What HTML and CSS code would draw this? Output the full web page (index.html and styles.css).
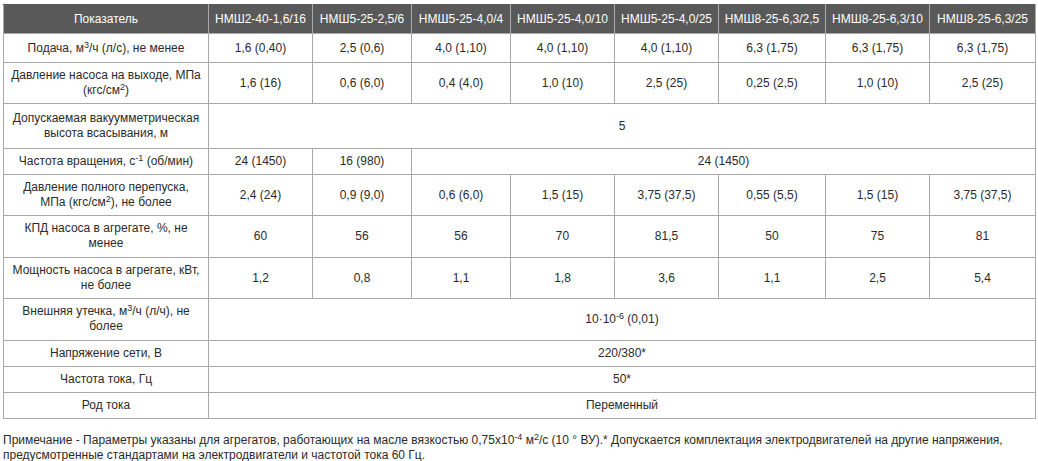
FILE: index.html
```html
<!DOCTYPE html>
<html lang="ru">
<head>
<meta charset="utf-8">
<title>НМШ</title>
<link rel="stylesheet" href="styles.css">
</head>
<body>
<table class="spec">
  <colgroup>
    <col class="c-name"><col class="c1"><col class="c2"><col class="c3"><col class="c4"><col class="c5"><col class="c6"><col class="c7"><col class="c8">
  </colgroup>
  <thead>
    <tr>
      <th>Показатель</th>
      <th>НМШ2-40-1,6/16</th>
      <th>НМШ5-25-2,5/6</th>
      <th>НМШ5-25-4,0/4</th>
      <th>НМШ5-25-4,0/10</th>
      <th>НМШ5-25-4,0/25</th>
      <th>НМШ8-25-6,3/2,5</th>
      <th>НМШ8-25-6,3/10</th>
      <th>НМШ8-25-6,3/25</th>
    </tr>
  </thead>
  <tbody>
    <tr class="r1">
      <td>Подача, м<sup>3</sup>/ч (л/с), не менее</td>
      <td>1,6 (0,40)</td><td>2,5 (0,6)</td><td>4,0 (1,10)</td><td>4,0 (1,10)</td><td>4,0 (1,10)</td><td>6,3 (1,75)</td><td>6,3 (1,75)</td><td>6,3 (1,75)</td>
    </tr>
    <tr>
      <td>Давление насоса на выходе, МПа (кгс/см<sup>2</sup>)</td>
      <td>1,6 (16)</td><td>0,6 (6,0)</td><td>0,4 (4,0)</td><td>1,0 (10)</td><td>2,5 (25)</td><td>0,25 (2,5)</td><td>1,0 (10)</td><td>2,5 (25)</td>
    </tr>
    <tr class="tall">
      <td>Допускаемая вакуумметрическая высота всасывания, м</td>
      <td colspan="8">5</td>
    </tr>
    <tr>
      <td>Частота вращения, с<sup>-1</sup> (об/мин)</td>
      <td>24 (1450)</td><td>16 (980)</td><td colspan="6">24 (1450)</td>
    </tr>
    <tr>
      <td>Давление полного перепуска, МПа (кгс/см<sup>2</sup>), не более</td>
      <td>2,4 (24)</td><td>0,9 (9,0)</td><td>0,6 (6,0)</td><td>1,5 (15)</td><td>3,75 (37,5)</td><td>0,55 (5,5)</td><td>1,5 (15)</td><td>3,75 (37,5)</td>
    </tr>
    <tr class="two">
      <td>КПД насоса в агрегате, %, не менее</td>
      <td>60</td><td>56</td><td>56</td><td>70</td><td>81,5</td><td>50</td><td>75</td><td>81</td>
    </tr>
    <tr>
      <td>Мощность насоса в агрегате, кВт, не более</td>
      <td>1,2</td><td>0,8</td><td>1,1</td><td>1,8</td><td>3,6</td><td>1,1</td><td>2,5</td><td>5,4</td>
    </tr>
    <tr class="two">
      <td>Внешняя утечка, м<sup>3</sup>/ч (л/ч), не более</td>
      <td colspan="8">10·10<sup>-6</sup> (0,01)</td>
    </tr>
    <tr>
      <td>Напряжение сети, В</td>
      <td colspan="8">220/380*</td>
    </tr>
    <tr>
      <td>Частота тока, Гц</td>
      <td colspan="8">50*</td>
    </tr>
    <tr>
      <td>Род тока</td>
      <td colspan="8">Переменный</td>
    </tr>
  </tbody>
</table>
<p class="note">Примечание - Параметры указаны для агрегатов, работающих на масле вязкостью 0,75х10<sup>-4</sup> м<sup>2</sup>/с (10 ° ВУ).* Допускается комплектация электродвигателей на другие напряжения, предусмотренные стандартами на электродвигатели и частотой тока 60 Гц.</p>
</body>
</html>
```
FILE: styles.css
```css
html, body {
  margin: 0;
  padding: 0;
  background: #ffffff;
}
body {
  padding: 4px 4px 0 3px;
  font-family: "Liberation Sans", Arial, sans-serif;
  font-size: 12px;
  color: #2b2b2b;
}
.spec {
  width: 1032px;
  border-collapse: collapse;
  table-layout: fixed;
}
.c-name { width: 205px; }
.c1 { width: 104px; }
.c2 { width: 99px; }
.c3 { width: 99px; }
.c4 { width: 104px; }
.c5 { width: 104px; }
.c6 { width: 107px; }
.c7 { width: 104px; }
.c8 { width: 106px; }
.spec th {
  background: #595959;
  color: #ffffff;
  font-weight: normal;
  height: 28px;
  padding: 0 2px;
  border: 1px solid #a8a8a8;
  border-top-color: #595959;
  text-align: center;
  white-space: nowrap;
  line-height: 15px;
}
.spec td {
  border: 1px solid #a8a8a8;
  text-align: center;
  vertical-align: middle;
  padding: 5px 6px;
  line-height: 15px;
  height: 15px;
}
.spec tr.r1 td { height: 18px; }
.spec tr.tall td { padding-top: 7px; padding-bottom: 7px; }
.spec tr.two td { padding-bottom: 6px; }
sup {
  font-size: 9px;
  line-height: 0;
  vertical-align: 4px;
}
.note {
  margin: 14px 0 0 0;
  line-height: 15px;
  color: #2b2b2b;
}
```
